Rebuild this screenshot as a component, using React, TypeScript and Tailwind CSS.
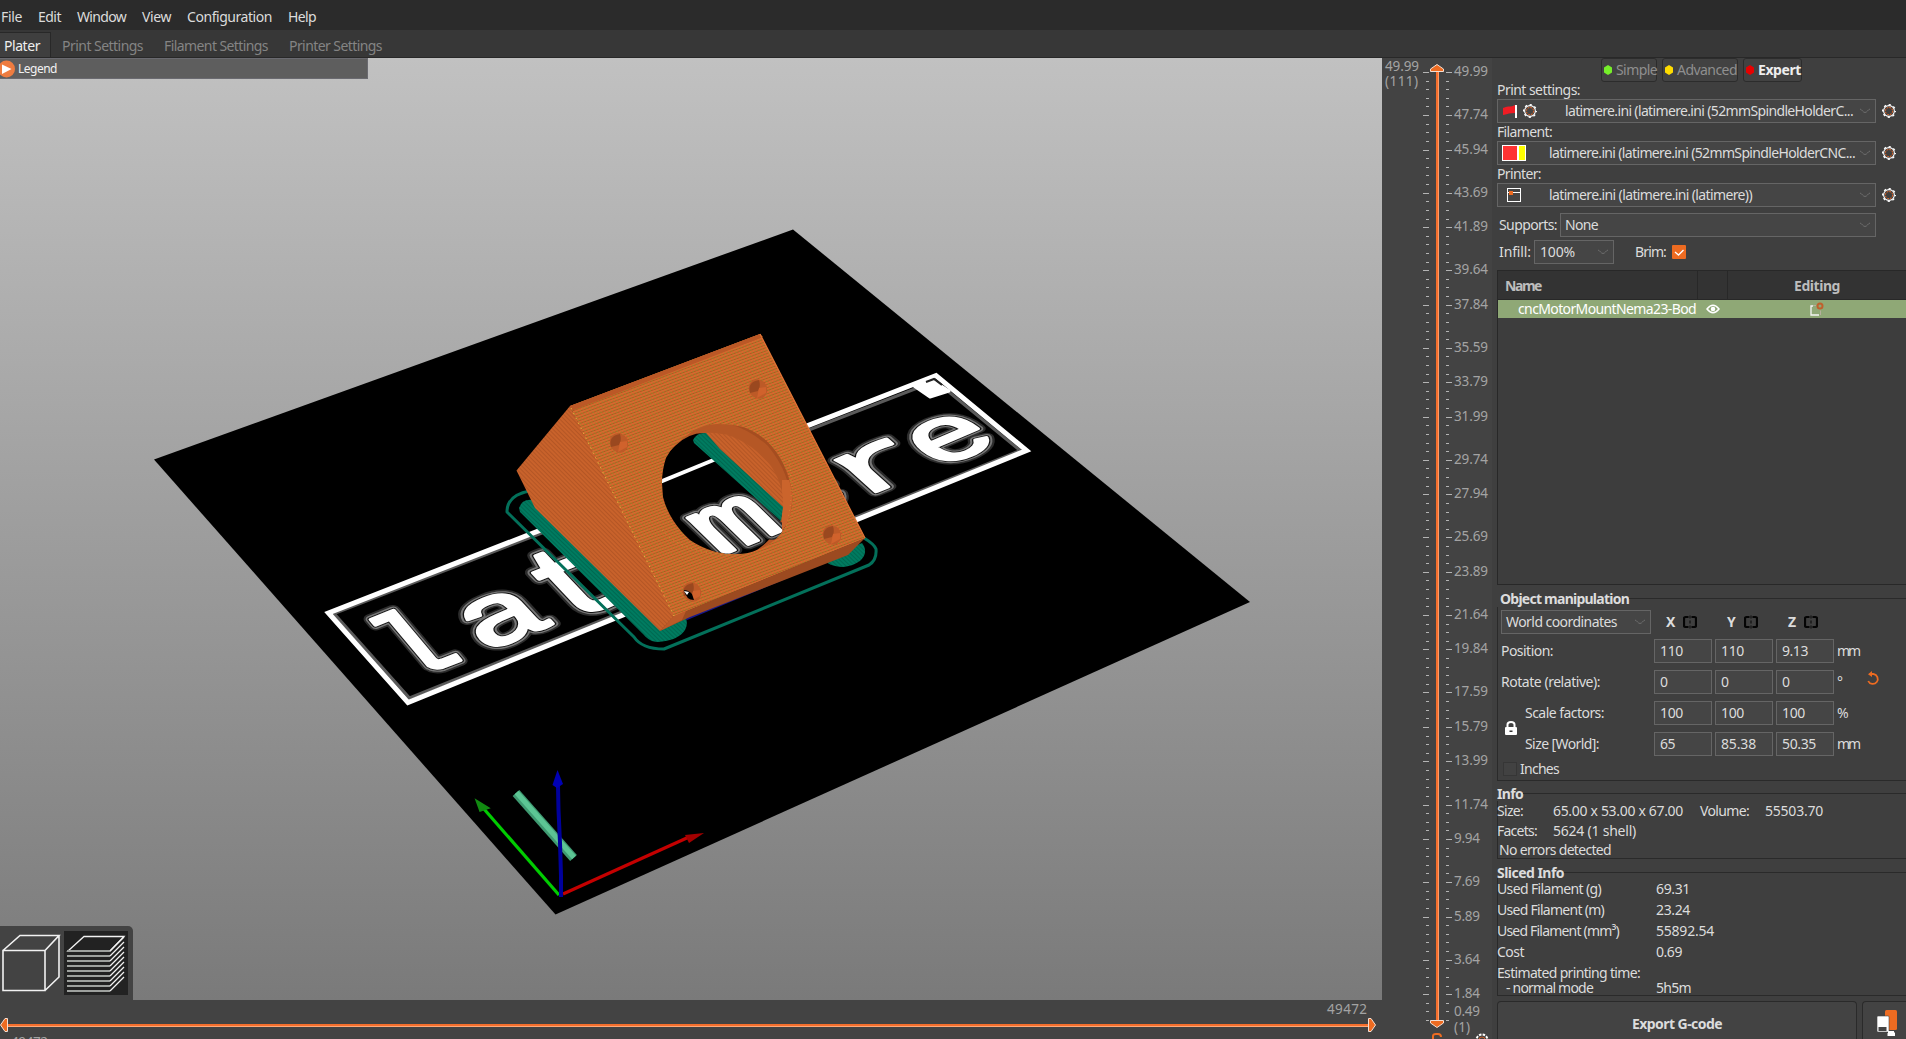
import { useLayoutEffect, useRef, useState, type ReactNode } from "react";

/* A label whose tracking is adjusted so that it fills the given width. */
function T({ w, className = "", children }: { w: number; className?: string; children: string }) {
  const ref = useRef<HTMLSpanElement>(null);
  const [ls, setLs] = useState(0);
  useLayoutEffect(() => {
    if (!ref.current) return;
    const natural = ref.current.getBoundingClientRect().width - ls * children.length;
    setLs((w - natural) / children.length);
  }, [w, children]);
  return (
    <span ref={ref} className={`inline-block shrink-0 whitespace-pre ${className}`} style={{ letterSpacing: ls }}>
      {children}
    </span>
  );
}

/* ---------- small icons ---------- */

function Gear() {
  return (
    <svg width="14" height="14" viewBox="0 0 14 14" className="shrink-0" fill="none">
      <circle cx="7" cy="7" r="5.4" stroke="#fff" strokeWidth="1.1" />
      <circle cx="7" cy="7" r="6.3" stroke="#fff" strokeWidth="1.4" strokeDasharray="2.2 2.75" strokeDashoffset="1.1" />
      <circle cx="7" cy="7" r="3.6" stroke="#d2622a" strokeWidth="1.100" strokeDasharray="1.8 1" />
    </svg>
  );
}

function Chevron() {
  return (
    <svg width="12" height="6" viewBox="0 0 12 6" className="shrink-0" fill="none" stroke="#6e6e6e" strokeWidth="1">
      <path d="M1 1 C3 1.5 4 4.5 6 4.5 C8 4.5 9 1.5 11 1" />
    </svg>
  );
}

function Mirror() {
  return (
    <svg width="14" height="14" viewBox="0 0 14 14" className="shrink-0" fill="none" stroke="#050505" strokeWidth="2.200">
      <path d="M5.500 2H2.500Q1 2 1 3.500V10.500Q1 12 2.500 12H5.500M8.500 2H11.500Q13 2 13 3.500V10.500Q13 12 11.500 12H8.500" />
      <path d="M7 .5V13.500" stroke="#1c1c1c" strokeWidth="1.600" strokeDasharray="3 2 3 2 3" />
    </svg>
  );
}

function Combo({ className, children }: { className: string; children: ReactNode }) {
  return (
    <div className={`flex h-6 shrink-0 items-center border border-[#656565] bg-[#454545] pr-1 ${className}`}>
      {children}
      <span className="flex-1" />
      <Chevron />
    </div>
  );
}

/* ---------- 3D scene ---------- */

type Pt = [number, number];

/* One letter of the bed texture: its glyph box is laid on the parallelogram p0 (top left), p1 (top right), p2 (bottom left). */
function BedLetter({ ch, x0, x1, h, p0, p1, p2 }: { ch: string; x0: number; x1: number; h: number; p0: Pt; p1: Pt; p2: Pt }) {
  const a = (p1[0] - p0[0]) / (x1 - x0);
  const b = (p1[1] - p0[1]) / (x1 - x0);
  const c = (p2[0] - p0[0]) / h;
  const d = (p2[1] - p0[1]) / h;
  const m = `matrix(${a} ${b} ${c} ${d} ${p2[0] - a * x0} ${p2[1] - b * x0})`;
  return (
    <g transform={m} fontSize="100" fontFamily="Liberation Mono" strokeLinejoin="round">
      <text stroke="#2c2c2c" strokeWidth="12" fill="#333">{ch}</text>
      <text stroke="#777" strokeWidth="8.500" fill="#777">{ch}</text>
      <text stroke="#111" strokeWidth="5.500" fill="#111">{ch}</text>
      <text stroke="#fff" strokeWidth="3.600" fill="#fff">{ch}</text>
    </g>
  );
}

const FRONT = "570,406 760,334 865,538 674,616";

function Bore({ x, y }: { x: number; y: number }) {
  return (
    <g>
      <ellipse cx={x} cy={y} rx="9" ry="10" fill="#bd5a27" transform={`rotate(-30 ${x} ${y})`} />
      <path d={`M${x - 8} ${y + 4}Q${x - 11} ${y - 7} ${x + 1} ${y - 9}Q${x + 3} ${y - 3} ${x} ${y + 2}Z`} fill="#9a481f" />
      <path d={`M${x - 1} ${y + 9}L${x + 1} ${y - 1}L${x + 8} ${y - 2}L${x + 8} ${y + 4}Z`} fill="#d0622c" />
    </g>
  );
}

function Scene() {
  return (
    <svg width="1382" height="942" viewBox="0 58 1382 942" className="block">
      <defs>
        <linearGradient id="sky" x1="0" y1="0" x2="0" y2="1">
          <stop offset="0" stopColor="#c1c1c1" />
          <stop offset="1" stopColor="#7a7a7a" />
        </linearGradient>
        <pattern id="front" width="3.400" height="2.900" patternUnits="userSpaceOnUse" patternTransform="rotate(-20.500) skewX(12)">
          <rect width="3.400" height="2.900" fill="#d8692e" />
          <rect y="1.900" width="2.400" height="1" fill="#b05620" />
          <rect x="2.200" y="1.500" width="1.200" height="1.400" fill="#8f8426" />
        </pattern>
        <pattern id="side" width="4" height="3" patternUnits="userSpaceOnUse" patternTransform="rotate(45)">
          <rect width="4" height="3" fill="#c8622b" />
          <rect y="2" width="4" height="1" fill="#b45625" />
        </pattern>
        <pattern id="brim" width="4" height="3" patternUnits="userSpaceOnUse" patternTransform="rotate(44)">
          <rect width="4" height="3" fill="#007b60" />
          <rect y="2" width="4" height="1" fill="#006850" />
        </pattern>
        <clipPath id="bore">
          <path d="M662 483Q662 470 666 458Q672 445 693 431Q705 424 718 424Q731 424 743 427Q754 431 763 438Q773 446 780 458Q787 470 790 483Q793 494 792 503Q791 514 787 523Q782 533 775 540Q767 547 757 550Q748 554 737 554Q724 554 713 551Q700 547 690 540Q680 531 673 520Q666 509 663 497Z" />
        </clipPath>
      </defs>
      <rect y="58" width="1382" height="942" fill="url(#sky)" />
      <polygon points="154,459.500 793,229.500 1250,602 555.500,914.500" fill="#000" />

      <g fill="none" strokeLinejoin="miter">
        <polygon points="334,613.500 409.500,698 1020,450.500 935.500,381" stroke="#5a5a5a" strokeWidth="3" />
        <polygon points="328.500,613 408,702.500 1026.500,450.500 936,375.500" stroke="#fff" strokeWidth="5" />
        <path d="M914 386L930 397L949 391L930 379Z" fill="#fff" stroke="#fff" strokeWidth="3" strokeLinejoin="round" />
        <path d="M926 382L934 379L942 385" stroke="#222" strokeWidth="2" />
      </g>
      <BedLetter ch="l" x0={8} x1={55} h={72} p0={[366, 622]} p1={[413, 603]} p2={[414, 679]} />
      <BedLetter ch="a" x0={5} x1={57} h={54} p0={[454, 611]} p1={[517, 585]} p2={[490, 650]} />
      <BedLetter ch="t" x0={5} x1={54} h={67} p0={[517, 563]} p1={[576, 540]} p2={[571, 620]} />
      <BedLetter ch="m" x0={5} x1={55} h={54} p0={[687, 517]} p1={[743, 494]} p2={[725, 554]} />
      <BedLetter ch="e" x0={5} x1={55} h={54} p0={[757, 487]} p1={[812, 464]} p2={[797, 523]} />
      <BedLetter ch="r" x0={14} x1={54} h={54} p0={[838, 458]} p1={[889, 437]} p2={[876, 492]} />
      <BedLetter ch="e" x0={5} x1={55} h={54} p0={[901, 434]} p1={[957, 410]} p2={[942, 467]} />

      {/* skirt and brim */}
      <g fill="none" stroke="#03705a" strokeWidth="3" strokeLinejoin="round">
        <path d="M530 491Q507 495 507 512L634 637Q642 649 664 649L869 565Q877 560 876 549Q874 544 864 538" />
      </g>
      <path d="M519 508Q522 498 534 500L686 618C690 630 680 641 657 642C649 641 647 638 642 633L520 512Z" fill="url(#brim)" />
      <path d="M823 560L862 543C870 553 862 565 843 567C833 567 827 563 823 560Z" fill="url(#brim)" />
      <path d="M686 619L845 553" stroke="#17178c" strokeWidth="2.500" />

      {/* printed part */}
      <polygon points="570,406 516.500,470.500 535,508 660,631 676,616" fill="url(#side)" />
      <polygon points="674,616 660,631 690,617 848,555 865,538" fill="#9c4a20" />
      <polygon points="674,616 660,631 682,620 686,611" fill="#bb5a28" />
      <polygon points={FRONT} fill="#d2682e" />
      <polygon points={FRONT} fill="url(#front)" />
      <path d="M570 406L760 334L763 337L571 411Z" fill="#bb5826" />
      <path d="M760 334L865 538" stroke="#df7436" strokeWidth="1.200" />
      <path d="M571 408L674 616" stroke="#e5b13d" strokeWidth="1" strokeDasharray="1.500 4" />

      <g clipPath="url(#bore)">
        <rect x="650" y="415" width="150" height="150" fill="#b55725" />
        <path d="M700 420Q740 420 768 446Q796 480 790 520L800 520V415H700Z" fill="#a54d20" />
        <path d="M650 470L675 446Q688 433 704 433L782 507Q783 532 757 550L740 560L680 556L640 520Z" fill="#000" />
        <path d="M655 484L716 459" stroke="#fff" strokeWidth="4" />
        <BedLetter ch="m" x0={5} x1={55} h={54} p0={[687, 517]} p1={[743, 494]} p2={[725, 554]} />
        <path d="M782 480V535L757 552L765 558L800 540V480Z" fill="#cb642c" />
        <path d="M704 433Q738 430 768 462Q785 484 783 510L716 447Z" fill="url(#side)" />
        <path d="M693 440Q697 432 706 433L720 449L783 507L781 521L694 443Z" fill="url(#brim)" />
      </g>
      <path d="M789 460Q795 500 785 530M662 530Q680 552 730 555" fill="none" stroke="#e3ad3a" strokeWidth="0.800" strokeDasharray="1 4" opacity="0.600" />

      <Bore x={619} y={443} />
      <Bore x={758} y={389} />
      <Bore x={832} y={535} />
      <Bore x={692} y={592} />
      <path d="M684 590Q688 590 692 594L694 600Q686 600 684 590Z" fill="#000" />
      <path d="M684 591L689 592L687 595Z" fill="#fff" />

      {/* purge line and axes */}
      <path d="M516 793L573.500 858" stroke="#3f9a72" strokeWidth="9" />
      <path d="M516.500 792.500L574 857.500" stroke="#5cc594" strokeWidth="5" />
      <path d="M563 894L689 837" stroke="#c40000" strokeWidth="3.200" />
      <path d="M704 833L685 835L689 843Z" fill="#a30000" />
      <path d="M559 895L484 809" stroke="#00cc00" strokeWidth="3.200" />
      <path d="M476 800L480 811L489 808Z" fill="#128a12" stroke="#128a12" strokeWidth="1.500" />
      <path d="M561 897L561 876L560 843L558.500 810L558 786" fill="none" stroke="#00009c" strokeWidth="4" />
      <path d="M557.500 770L552.500 785L557 788L563 784Z" fill="#0000b4" />
    </svg>
  );
}

/* ---------- layer ruler ---------- */

const MAJOR = [
  "49.99", "47.74", "45.94", "43.69", "41.89", "39.64", "37.84", "35.59", "33.79", "31.99", "29.74", "27.94", "25.69",
  "23.89", "21.64", "19.84", "17.59", "15.79", "13.99", "11.74", "9.94", "7.69", "5.89", "3.64", "1.84",
];
const yOf = (v: number) => Math.round(72 + ((49.99 - v) / 0.45) * 8.618) + 0.5;

function Ruler() {
  const majors = new Set(MAJOR.map((m) => Math.round((49.99 - Number(m)) / 0.45)));
  return (
    <svg width="110" height="981" viewBox="1382 58 110 981" className="block" fontFamily="Noto Sans" fontSize="13.500" fill="#a3a3a3">
      {Array.from({ length: 111 }, (_, i) => {
        const y = Math.round(72 + i * 8.618) + 0.5;
        const big = majors.has(i);
        return <path key={i} d={big ? `M1423 ${y}h6M1446 ${y}h6` : `M1426 ${y}h3M1446 ${y}h3`} stroke="#b4b4b4" />;
      })}
      {MAJOR.map((m) => (
        <text key={m} x="1454" y={yOf(Number(m)) + 3.5} textLength={m.length === 5 ? 34 : 26}>{m}</text>
      ))}
      <text x="1454" y="1016" textLength="26">0.49</text>
      <text x="1454" y="1032" textLength="16">(1)</text>
      <text x="1385" y="71" textLength="34">49.99</text>
      <text x="1385" y="86" textLength="33">(111)</text>
      <rect x="1436" y="70" width="3" height="952" fill="#f56f2d" />
      <rect x="1438" y="70" width="1" height="952" fill="#ff9c6a" />
      <path d="M1430.500 71.500V69L1437 64.500L1443.500 69V71.500Z" fill="#ed6b21" stroke="#f3dfd3" />
      <path d="M1430.500 1020.500V1023L1437 1027.500L1443.500 1023V1020.500Z" fill="#ed6b21" stroke="#f3dfd3" />
      <path d="M1433 1039V1036Q1433 1034 1436 1034H1438Q1441 1034 1441 1037" fill="none" stroke="#ed6b21" strokeWidth="2" />
      <circle cx="1482" cy="1040" r="5.500" fill="none" stroke="#fff" strokeWidth="2" strokeDasharray="2.500 1.200" />
      <circle cx="1482" cy="1040" r="3" fill="none" stroke="#c25a24" />
    </svg>
  );
}

/* ---------- sidebar ---------- */

function Preset({ label, lw, text, tw, icon, pad }: { label: string; lw: number; text: string; tw: number; icon: ReactNode; pad: string }) {
  return (
    <>
      <div className="flex h-[18px] items-center pl-[5px]"><T w={lw}>{label}</T></div>
      <div className="flex items-center gap-[6px] pl-[5px]">
        <Combo className="w-[379px]">
          <span className={`flex items-center ${pad}`}>{icon}</span>
          <T w={tw}>{text}</T>
        </Combo>
        <Gear />
      </div>
    </>
  );
}

function Field({ v, w }: { v: string; w: number }) {
  return (
    <div className="flex h-6 w-[58px] shrink-0 items-center border border-[#656565] bg-[#454545] pl-[5px]"><T w={w}>{v}</T></div>
  );
}

function Row({ label, lw, vals, unit, uw, lab, extra }: { label: string; lw: number; vals: [string, number][]; unit: string; uw: number; lab: string; extra?: ReactNode }) {
  return (
    <div className="flex h-6 items-center">
      <div className={`shrink-0 ${lab}`}><T w={lw}>{label}</T></div>
      <div className="flex gap-[3px]">{vals.map(([v, w], i) => <Field key={i} v={v} w={w} />)}</div>
      <div className="w-[29px] pl-[3px]"><T w={uw}>{unit}</T></div>
      {extra}
    </div>
  );
}

function Title({ w, className, children }: { w: number; className: string; children: string }) {
  return (
    <div className={`flex items-center ${className}`}>
      <T w={w} className="font-bold leading-none">{children}</T>
      <span className="h-px flex-1 bg-[#2a2a2a]" />
    </div>
  );
}

function Mode({ color, className, children }: { color: string; className: string; children: ReactNode }) {
  return (
    <div className={`flex h-6 items-center gap-[3px] rounded-[3px] border border-[#2c2c2c] bg-[#424242] pl-[1px] ${className}`}>
      <svg width="10" height="12" viewBox="0 0 10 12" className="shrink-0"><path d="M5 1L9 3.500V8.500L5 11L1 8.500V3.500Z" fill={color} /></svg>
      {children}
    </div>
  );
}

function Sidebar() {
  return (
    <div className="flex w-[414px] shrink-0 flex-col bg-[#3f3f3f]">
      <div className="flex h-6 gap-[5px] pl-[109px]">
        <Mode color="#76ee2a" className="w-14 text-[#8f8f8f]"><T w={41}>Simple</T></Mode>
        <Mode color="#ffdc00" className="w-[76px] text-[#8f8f8f]"><T w={60}>Advanced</T></Mode>
        <Mode color="#e60000" className="w-[59px] text-[#eee]"><T w={43} className="font-bold">Expert</T></Mode>
      </div>
      <div className="-mt-px flex flex-col">
        <Preset label="Print settings:" lw={83} text="latimere.ini (latimere.ini (52mmSpindleHolderC..." tw={288} pad="w-[67px] pl-[5px] gap-[6px]"
          icon={<>
            <svg width="14" height="14" viewBox="0 0 14 14"><path d="M0 4Q4 2 6 2.500T12 1V9Q8 9 6 9.500T0 11Z" fill="#f01c24" /><path d="M13 1V14" stroke="#fff" strokeWidth="2" /></svg>
            <Gear />
          </>} />
        <Preset label="Filament:" lw={55} text="latimere.ini (latimere.ini (52mmSpindleHolderCNC..." tw={306} pad="w-[51px] pl-1"
          icon={<span className="flex h-4 w-6 border border-white bg-white"><span className="w-[14px] bg-[#ff3333]" /><span className="ml-[2px] flex-1 bg-[#ffff00]" /></span>} />
        <Preset label="Printer:" lw={44} text="latimere.ini (latimere.ini (latimere))" tw={203} pad="w-[51px] pl-[9px]"
          icon={<svg width="14" height="14" viewBox="0 0 14 14" fill="none"><rect x=".5" y=".5" width="13" height="13" stroke="#fff" /><path d="M1 4.500H13" stroke="#fff" /><rect x="2" y="3" width="4" height="4" fill="#ed6b21" /></svg>} />
      </div>
      <div className="mt-[6px] flex h-6 items-center pl-[7px]">
        <div className="w-[61px]"><T w={58}>Supports:</T></div>
        <Combo className="w-[316px] pl-1"><T w={33}>None</T></Combo>
      </div>
      <div className="mt-[3px] flex h-6 items-center pl-[7px]">
        <div className="w-[35px]"><T w={32}>Infill:</T></div>
        <Combo className="w-20 pl-[5px]"><T w={35}>100%</T></Combo>
        <div className="w-[58px] pl-[21px]"><T w={31}>Brim:</T></div>
        <svg width="14" height="14" viewBox="0 0 14 14"><rect width="14" height="14" rx="1" fill="#ed6b21" /><path d="M3 7L6.500 10L11.500 5" fill="none" stroke="#fff" strokeWidth="1.300" /></svg>
      </div>

      <div className="ml-[5px] mt-[6px] flex h-[315px] flex-col border border-r-0 border-[#282828] bg-[#3d3d3d]">
        <div className="flex h-[29px] shrink-0 border-b border-[#282828] bg-[#333] pt-px font-bold text-[#bdbdbd]">
          <div className="-mt-px flex w-[200px] items-center border-r border-[#282828] pl-[7px] pt-px"><T w={36}>Name</T></div>
          <div className="-mt-px w-[30px] border-r border-[#282828]" />
          <div className="flex flex-1 items-center justify-center"><T w={46}>Editing</T></div>
        </div>
        <div className="flex h-[18px] shrink-0 items-center bg-[#8fa876] text-white">
          <div className="w-[208px] pl-5"><T w={178}>cncMotorMountNema23-Bod</T></div>
          <svg width="14" height="10" viewBox="0 0 14 10" fill="none" stroke="#fff" strokeWidth="1.500"><path d="M1 5Q7-2.500 13 5Q7 12.500 1 5Z" /><circle cx="7" cy="5" r="1.500" fill="#fff" /></svg>
          <svg width="14" height="14" viewBox="0 0 14 14" fill="none" className="ml-[90px]"><path d="M3 4H1V13H9" stroke="#f4f4f4" strokeWidth="1.300" /><path d="M10.500 8.500V13M3 3.500H6" stroke="#b5b09c" /><circle cx="10" cy="4" r="2.500" stroke="#c0602c" strokeWidth="2" /></svg>
        </div>
      </div>

      <Title w={129} className="mt-[5px] h-[17px] pl-2">Object manipulation</Title>
      <div className="ml-[5px] flex h-[174px] flex-col border-b border-l border-[#2a2a2a] pt-[3px]">
        <div className="flex h-6 items-center pl-[3px] font-bold">
          <Combo className="w-[150px] pl-1 font-normal"><T w={111}>World coordinates</T></Combo>
          <div className="flex w-[61px] items-center gap-[7px] pl-[15px]"><T w={10}>X</T><Mirror /></div>
          <div className="flex w-[61px] items-center gap-[7px] pl-[15px]"><T w={10}>Y</T><Mirror /></div>
          <div className="flex w-[61px] items-center gap-[7px] pl-[15px]"><T w={9}>Z</T><Mirror /></div>
        </div>
        <div className="mt-[5px] flex flex-col gap-[7px]">
          <Row label="Position:" lw={52} lab="w-[156px] pl-[3px]" vals={[["110", 23], ["110", 23], ["9.13", 26]]} unit="mm" uw={22} />
          <Row label="Rotate (relative):" lw={99} lab="w-[156px] pl-[3px]" vals={[["0", 8], ["0", 8], ["0", 8]]} unit="°" uw={6}
            extra={<svg width="14" height="15" viewBox="0 0 14 15" className="-mt-[7px] ml-[3px]" fill="none"><path d="M3.500 3H7.500A5 5 0 1 1 2.200 10" stroke="#ed6b21" strokeWidth="1.800" /><path d="M6 0L2 3.200L6 6Z" fill="#ed6b21" /></svg>} />
          <div className="flex">
            <div className="flex w-[27px] items-center pb-[2px] pl-[7px]">
              <svg width="12" height="14" viewBox="0 0 12 14"><path d="M2.500 7V3.500Q2.500 1 6 1T9.500 3.500V7" fill="none" stroke="#fff" strokeWidth="2" /><rect y="6" width="12" height="8" rx="1" fill="#fff" /><path d="M4.500 9.500H7.500V11H4.500Z" fill="#333" /></svg>
            </div>
            <div className="flex flex-col gap-[7px]">
              <Row label="Scale factors:" lw={79} lab="w-[129px]" vals={[["100", 23], ["100", 23], ["100", 23]]} unit="%" uw={11} />
              <Row label="Size [World]:" lw={74} lab="w-[129px]" vals={[["65", 15], ["85.38", 35], ["50.35", 34]]} unit="mm" uw={22} />
            </div>
          </div>
        </div>
        <div className="mt-[6px] flex h-[14px] items-center gap-[3px] pl-[5px]">
          <span className="size-[14px] border border-[#363636] bg-[#424242]" />
          <T w={39}>Inches</T>
        </div>
      </div>

      <Title w={26} className="mt-[5px] h-[15px] pl-[5px]">Info</Title>
      <div className="ml-[5px] flex h-[58px] flex-col border-b border-l border-[#2a2a2a]">
        <div className="-ml-px flex h-[19px] items-center">
          <div className="w-14"><T w={26}>Size:</T></div>
          <div className="w-[147px]"><T w={130}>65.00 x 53.00 x 67.00</T></div>
          <div className="w-[65px]"><T w={49}>Volume:</T></div>
          <T w={58}>55503.70</T>
        </div>
        <div className="-ml-px flex h-[22px] items-center">
          <div className="w-14"><T w={40}>Facets:</T></div>
          <T w={83}>5624 (1 shell)</T>
        </div>
        <div className="flex h-4 items-center pl-[1px]"><T w={112}>No errors detected</T></div>
      </div>

      <Title w={67} className="mt-2 h-[11px] pl-[5px]">Sliced Info</Title>
      <div className="ml-[5px] flex h-[118px] flex-col border-b border-l border-[#2a2a2a]">
        {([["Used Filament (g)", 104, "69.31", 34], ["Used Filament (m)", 107, "23.24", 34], ["Used Filament (mm³)", 122, "55892.54", 58], ["Cost", 27, "0.69", 26]] as [string, number, string, number][]).map(([l, lw, v, w]) => (
          <div key={l} className="-ml-px flex h-[21px] shrink-0 items-center">
            <div className="w-[159px]"><T w={lw}>{l}</T></div>
            <T w={w}>{v}</T>
          </div>
        ))}
        <div className="-ml-px flex h-[21px] shrink-0 items-center"><T w={143}>Estimated printing time:</T></div>
        <div className="-ml-px flex h-[9px] items-center">
          <div className="w-[150px] shrink-0 pl-[9px]"><T w={87}>- normal mode</T></div>
          <div className="pl-[9px]"><T w={35}>5h5m</T></div>
        </div>
      </div>

      <div className="mt-[5px] flex flex-1 gap-[5px] pl-[5px]">
        <div className="flex w-[360px] items-center justify-center rounded-t-[4px] border border-b-0 border-[#2a2a2a] bg-[#434343] pt-[6px] font-bold"><T w={90}>Export G-code</T></div>
        <div className="flex flex-1 items-center rounded-tl-[4px] border border-b-0 border-r-0 border-[#2a2a2a] bg-[#434343] pl-[14px] pt-1">
          <svg width="22" height="28" viewBox="0 0 22 28"><rect x="8" y="1" width="12" height="20" rx="1.500" fill="#ed6b21" /><rect x="0" y="7" width="12" height="16" rx="1" fill="#fff" stroke="#434343" strokeWidth=".6" /><rect x="1.500" y="18" width="8" height="4" fill="#444" /><path d="M11 22H17V23.500H18V27H10.500V24H11Z" fill="#fff" /></svg>
        </div>
      </div>
    </div>
  );
}

export default function App() {
  return (
    <div className="flex h-[1039px] w-[1906px] flex-col overflow-hidden bg-[#434343] font-['Noto_Sans',sans-serif] text-[14px] leading-[18px] text-[#dcdcdc]">
      <div className="flex h-[30px] shrink-0 items-center gap-4 bg-[#2b2b2b] pl-[1px] pt-[3px]">
        <T w={21}>File</T><T w={23}>Edit</T><T w={49}>Window</T><T w={29}>View</T><T w={85}>Configuration</T><T w={28}>Help</T>
      </div>
      <div className="flex h-7 shrink-0 items-end border-b border-[#282828] bg-[#373737] text-[#848484]">
        <div className="flex h-[25px] w-[51px] items-center border-r border-t border-[#282828] bg-[#3f3f3f] pl-1 pt-px text-[#eee]"><T w={36}>Plater</T></div>
        <div className="flex h-[25px] items-center gap-[21px] pl-[11px] pt-[2px]"><T w={81}>Print Settings</T><T w={104}>Filament Settings</T><T w={93}>Printer Settings</T></div>
      </div>
      <div className="flex min-h-0 flex-1">
        <div className="flex w-[1382px] shrink-0 flex-col">
          <div className="relative h-[942px] shrink-0">
            <Scene />
            <div className="absolute left-0 top-0 flex h-[21px] w-[368px] items-center border border-l-0 border-[#6a6a70] bg-[#5e5e5e]">
              <svg width="18" height="18" viewBox="0 0 18 18"><circle cx="6.500" cy="9" r="8.500" fill="#ee7c40" /><path d="M2 4.500L11.500 9L2 14Z" fill="#fff" /></svg>
              <T w={39} className="text-[12px] text-[#f2f2f2]">Legend</T>
            </div>
            <div className="absolute bottom-0 left-0 flex h-[74px] w-[133px] rounded-tr-[5px] bg-[#434343] pt-[5px]">
              <svg width="64" height="64" viewBox="0 931 64 64" fill="none" stroke="#f2f2f2" strokeWidth="1.600"><path d="M3 950.500H45V990.500H3ZM3 950.500L20 935.500H59L45 950.500M59 935.500V977L45 990.500" /></svg>
              <svg width="64" height="64" viewBox="64 931 64 64" className="bg-[#222]" fill="none">
                <path d="M68 951L84 936.500H124L110 951Z" stroke="#f2f2f2" strokeWidth="1.300" />
                {Array.from({ length: 9 }, (_, i) => {
                  const y = 951 + i * 5;
                  return <g key={i}><path d={`M67 ${y}H110`} stroke="#9da09d" strokeWidth="2" /><path d={`M110 ${y}L124 ${y - 14}`} stroke="#f2f2f2" strokeWidth="1.200" /></g>;
                })}
              </svg>
            </div>
          </div>
          <svg width="1382" height="39" viewBox="0 1000 1382 39" className="block" fontFamily="Noto Sans" fontSize="13.500" fill="#a3a3a3">
            <rect x="6" y="1024" width="1364" height="3" fill="#f56f2d" />
            <rect x="6" y="1026" width="1364" height="1" fill="#ffa878" />
            <path d="M7.500 1018.500V1031.500H5L.5 1025L5 1018.500Z" fill="#ed6b21" stroke="#f3dfd3" />
            <path d="M1368.500 1018.500V1031.500H1371L1375.500 1025L1371 1018.500Z" fill="#ed6b21" stroke="#f3dfd3" />
            <text x="1327" y="1014" textLength="40">49472</text>
            <text x="11" y="1047" textLength="37">49472</text>
          </svg>
        </div>
        <Ruler />
        <Sidebar />
      </div>
    </div>
  );
}
